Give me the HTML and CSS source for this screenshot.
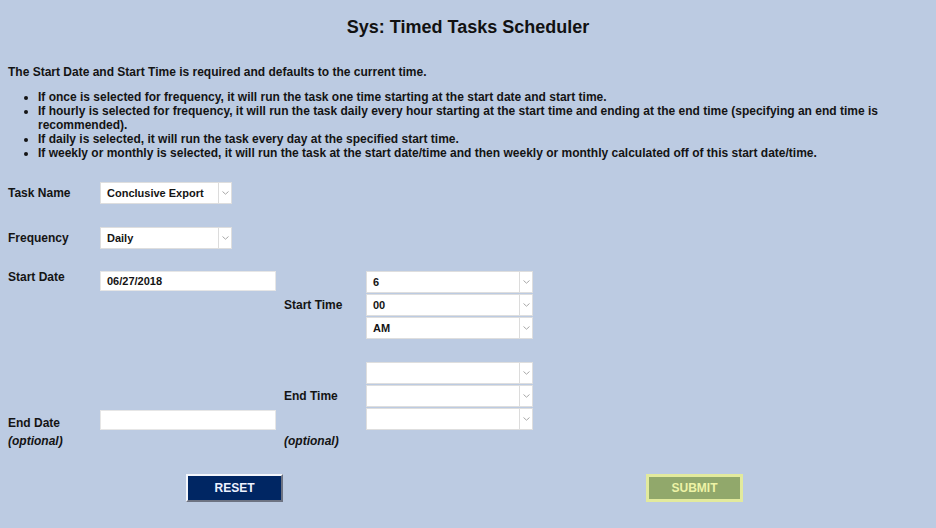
FILE: index.html
```html
<!DOCTYPE html>
<html lang="en">
<head>
  <meta charset="UTF-8">
  <title>Sys: Timed Tasks Scheduler</title>
  <link rel="stylesheet" href="styles.css">
</head>
<body>
  <div class="page">
    <h1>Sys: Timed Tasks Scheduler</h1>
    <p class="intro">The Start Date and Start Time is required and defaults to the current time.</p>
    <ul class="notes">
      <li>If once is selected for frequency, it will run the task one time starting at the start date and start time.</li>
      <li>If hourly is selected for frequency, it will run the task daily every hour starting at the start time and ending at the end time (specifying an end time is recommended).</li>
      <li>If daily is selected, it will run the task every day at the specified start time.</li>
      <li>If weekly or monthly is selected, it will run the task at the start date/time and then weekly or monthly calculated off of this start date/time.</li>
    </ul>

    <div class="field">
      <label class="label">Task Name</label>
      <div class="select short"><span class="value">Conclusive Export</span><span class="arrow"><svg width="7" height="4" viewBox="0 0 7 4"><path d="M0.5 0.5 L3.5 3.2 L6.5 0.5" fill="none" stroke="#a8a8a8" stroke-width="1"/></svg></span></div>
    </div>

    <div class="field freq">
      <label class="label">Frequency</label>
      <div class="select short"><span class="value">Daily</span><span class="arrow"><svg width="7" height="4" viewBox="0 0 7 4"><path d="M0.5 0.5 L3.5 3.2 L6.5 0.5" fill="none" stroke="#a8a8a8" stroke-width="1"/></svg></span></div>
    </div>

    <div class="time-grid start">
      <label class="label top">Start Date</label>
      <div class="input top">06/27/2018</div>
      <label class="label mid">Start Time</label>
      <div class="stack">
        <div class="select"><span class="value">6</span><span class="arrow"><svg width="7" height="4" viewBox="0 0 7 4"><path d="M0.5 0.5 L3.5 3.2 L6.5 0.5" fill="none" stroke="#a8a8a8" stroke-width="1"/></svg></span></div>
        <div class="select"><span class="value">00</span><span class="arrow"><svg width="7" height="4" viewBox="0 0 7 4"><path d="M0.5 0.5 L3.5 3.2 L6.5 0.5" fill="none" stroke="#a8a8a8" stroke-width="1"/></svg></span></div>
        <div class="select"><span class="value">AM</span><span class="arrow"><svg width="7" height="4" viewBox="0 0 7 4"><path d="M0.5 0.5 L3.5 3.2 L6.5 0.5" fill="none" stroke="#a8a8a8" stroke-width="1"/></svg></span></div>
      </div>
    </div>

    <div class="time-grid end">
      <label class="label bottom">End Date</label>
      <div class="input bottom"></div>
      <label class="label mid">End Time</label>
      <div class="stack">
        <div class="select"><span class="value"></span><span class="arrow"><svg width="7" height="4" viewBox="0 0 7 4"><path d="M0.5 0.5 L3.5 3.2 L6.5 0.5" fill="none" stroke="#a8a8a8" stroke-width="1"/></svg></span></div>
        <div class="select"><span class="value"></span><span class="arrow"><svg width="7" height="4" viewBox="0 0 7 4"><path d="M0.5 0.5 L3.5 3.2 L6.5 0.5" fill="none" stroke="#a8a8a8" stroke-width="1"/></svg></span></div>
        <div class="select"><span class="value"></span><span class="arrow"><svg width="7" height="4" viewBox="0 0 7 4"><path d="M0.5 0.5 L3.5 3.2 L6.5 0.5" fill="none" stroke="#a8a8a8" stroke-width="1"/></svg></span></div>
      </div>
      <span class="optional">(optional)</span>
      <span></span>
      <span class="optional">(optional)</span>
      <span></span>
    </div>

    <div class="actions">
      <button class="btn reset">RESET</button>
      <button class="btn submit">SUBMIT</button>
    </div>
  </div>
</body>
</html>
```

FILE: styles.css
```css
body {
  margin: 0;
  background: #bccbe2;
  font-family: 'Liberation Sans', Arial, sans-serif;
  font-weight: bold;
  font-size: 12px;
  color: #141414;
}
.page {
  padding: 0 8px;
}
h1 {
  margin: 0;
  padding-top: 16px;
  text-align: center;
  font-size: 18px;
  line-height: 22px;
  color: #111;
}
.intro {
  margin: 27px 0 0 0;
  line-height: 14px;
}
.notes {
  margin: 11px 0 0 0;
  padding-left: 30px;
  line-height: 14px;
}
.field {
  display: flex;
  align-items: center;
  margin-top: 22px;
}
.field.freq {
  margin-top: 23px;
}
.field .label {
  width: 92px;
}
.label {
  line-height: 14px;
}
.select {
  display: flex;
  height: 22px;
  box-sizing: border-box;
  background: #fff;
  border: 1px solid #dedede;
}
.select.short {
  width: 132px;
}
.select .value {
  flex: 1;
  padding-left: 6px;
  font-size: 11px;
  line-height: 20px;
}
.select .arrow {
  width: 12px;
  border-left: 1px solid #dcdcdc;
  display: flex;
  align-items: center;
  justify-content: center;
}
.time-grid {
  display: grid;
  grid-template-columns: 92px 184px 82px 167px;
}
.time-grid.start {
  margin-top: 22px;
}
.time-grid.end {
  margin-top: 23px;
  row-gap: 4px;
}
.input {
  width: 176px;
  height: 20px;
  box-sizing: border-box;
  background: #fff;
  border: 1px solid #e6e6e6;
  padding-left: 6px;
  font-size: 11px;
  line-height: 18px;
}
.top {
  align-self: start;
}
.label.top {
  margin-top: -1px;
}
.bottom {
  align-self: end;
}
.mid {
  align-self: center;
}
.stack {
  display: flex;
  flex-direction: column;
  gap: 1px;
}
.optional {
  font-style: italic;
  line-height: 14px;
}
.actions {
  display: flex;
  padding-left: 178px;
  gap: 363px;
  margin-top: 26px;
}
.btn {
  width: 97px;
  height: 28px;
  font-family: 'Liberation Sans', Arial, sans-serif;
  font-weight: bold;
  font-size: 12px;
  cursor: pointer;
}
.reset {
  background: #002663;
  color: #eef2ff;
  border: 2px solid;
  border-color: #f4f6fb #6d7382 #6d7382 #f4f6fb;
}
.submit {
  background: #91a86b;
  color: #edf3a6;
  border: 3px solid #e2ea9d;
}
```
